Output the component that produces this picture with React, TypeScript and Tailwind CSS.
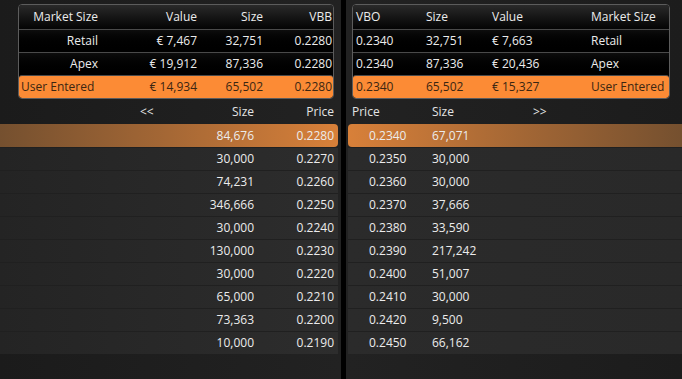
import React from "react";

const topLeft = [
  { name: "Retail", value: "€ 7,467", size: "32,751", px: "0.2280" },
  { name: "Apex", value: "€ 19,912", size: "87,336", px: "0.2280" },
  { name: "User Entered", value: "€ 14,934", size: "65,502", px: "0.2280", hi: true },
];
const topRight = [
  { name: "Retail", value: "€ 7,663", size: "32,751", px: "0.2340" },
  { name: "Apex", value: "€ 20,436", size: "87,336", px: "0.2340" },
  { name: "User Entered", value: "€ 15,327", size: "65,502", px: "0.2340", hi: true },
];
const bids = [
  ["84,676", "0.2280"],
  ["30,000", "0.2270"],
  ["74,231", "0.2260"],
  ["346,666", "0.2250"],
  ["30,000", "0.2240"],
  ["130,000", "0.2230"],
  ["30,000", "0.2220"],
  ["65,000", "0.2210"],
  ["73,363", "0.2200"],
  ["10,000", "0.2190"],
];
const asks = [
  ["0.2340", "67,071"],
  ["0.2350", "30,000"],
  ["0.2360", "30,000"],
  ["0.2370", "37,666"],
  ["0.2380", "33,590"],
  ["0.2390", "217,242"],
  ["0.2400", "51,007"],
  ["0.2410", "30,000"],
  ["0.2420", "9,500"],
  ["0.2450", "66,162"],
];

export default function App() {
  return (
    <div
      className="w-[682px] h-[379px] flex bg-[#1e1e1e] text-[12px] text-[#ececec] overflow-hidden"
      style={{ fontFamily: '"Open Sans", "Noto Sans", sans-serif' }}
    >
      {/* Left panel */}
      <div className="w-[341px] flex flex-col bg-gradient-to-r from-[#1b1b1b] to-[#222222]">
        <div className="pt-[4px] pl-[18px] pr-[7px]">
          <div className="border border-[#5c5c5c] rounded-[4px] overflow-hidden bg-black">
            <div className="h-[24px] flex items-center bg-gradient-to-b from-[#2a2a2a] to-[#050505]">
              <div className="w-[82px] text-right pr-[3px]">Market Size</div>
              <div className="w-[99px] text-right pr-[3px]">Value</div>
              <div className="w-[66px] text-right pr-[3px]">Size</div>
              <div className="flex-1 text-right pr-[1px]">VBB</div>
            </div>
            {topLeft.map((r) => (
              <div
                key={r.name}
                className={
                  r.hi
                    ? "h-[23px] flex items-center border-t border-[#4a4a4a] bg-[#fc8b35] text-[#3a2612] rounded-[3px]"
                    : "h-[23px] flex items-center border-t border-[#4a4a4a] bg-gradient-to-b from-[#0d0d0d] to-black"
                }
              >
                <div className={r.hi ? "w-[82px] text-left pl-[2px]" : "w-[82px] text-right pr-[3px]"}>{r.name}</div>
                <div className="w-[99px] text-right pr-[3px]">{r.value}</div>
                <div className="w-[66px] text-right pr-[3px]">{r.size}</div>
                <div className="flex-1 text-right pr-[1px]">{r.px}</div>
              </div>
            ))}
          </div>
        </div>
        <div className="h-[24px] mt-[1px] flex items-center text-[#e4e4e4]">
          <div className="w-[296px] pl-[140px]">&lt;&lt;</div>
          <div className="w-[-1px]" />
        </div>
        <div className="-mt-[24px] h-[24px] flex items-center text-[#e4e4e4]">
          <div className="w-[254px] text-right">Size</div>
          <div className="w-[80px] text-right">Price</div>
        </div>
        <div className="pr-[3px]">
          {bids.map(([s, p], i) => (
            <div
              key={i}
              className={
                i === 0
                  ? "h-[23px] flex items-center rounded-r-[4px] bg-gradient-to-r from-[#75502f] to-[#d88039]"
                  : "h-[23px] flex items-center bg-gradient-to-r from-[#242424] to-[#2d2d2d] border-t border-[#202020]"
              }
            >
              <div className="w-[254px] text-right">{s}</div>
              <div className="w-[80px] text-right">{p}</div>
            </div>
          ))}
        </div>
      </div>
      {/* Divider */}
      <div className="w-[5px] bg-black" />
      {/* Right panel */}
      <div className="flex-1 flex flex-col bg-gradient-to-r from-[#222222] to-[#1c1c1c]">
        <div className="pt-[4px] pl-[6px] pr-[12px]">
          <div className="border border-[#5c5c5c] rounded-[4px] overflow-hidden bg-black">
            <div className="h-[24px] flex items-center bg-gradient-to-b from-[#2a2a2a] to-[#050505]">
              <div className="w-[73px] pl-[3px]">VBO</div>
              <div className="w-[66px]">Size</div>
              <div className="w-[99px]">Value</div>
              <div className="flex-1">Market Size</div>
            </div>
            {topRight.map((r) => (
              <div
                key={r.name}
                className={
                  r.hi
                    ? "h-[23px] flex items-center border-t border-[#4a4a4a] bg-[#fc8b35] text-[#3a2612] rounded-[3px]"
                    : "h-[23px] flex items-center border-t border-[#4a4a4a] bg-gradient-to-b from-[#0d0d0d] to-black"
                }
              >
                <div className="w-[73px] pl-[3px]">{r.px}</div>
                <div className="w-[66px]">{r.size}</div>
                <div className="w-[99px]">{r.value}</div>
                <div className="flex-1">{r.name}</div>
              </div>
            ))}
          </div>
        </div>
        <div className="h-[24px] mt-[1px] flex items-center text-[#e4e4e4]">
          <div className="w-[86px] pl-[6px]">Price</div>
          <div className="w-[101px]">Size</div>
          <div>&gt;&gt;</div>
        </div>
        <div className="pl-[2px]">
          {asks.map(([p, s], i) => (
            <div
              key={i}
              className={
                i === 0
                  ? "h-[23px] flex items-center rounded-l-[4px] bg-gradient-to-r from-[#d88039] to-[#75502f]"
                  : "h-[23px] flex items-center bg-gradient-to-r from-[#2b2b2b] to-[#292929] border-t border-[#202020]"
              }
            >
              <div className="w-[84px] pl-[21px]">{p}</div>
              <div>{s}</div>
            </div>
          ))}
        </div>
      </div>
    </div>
  );
}
